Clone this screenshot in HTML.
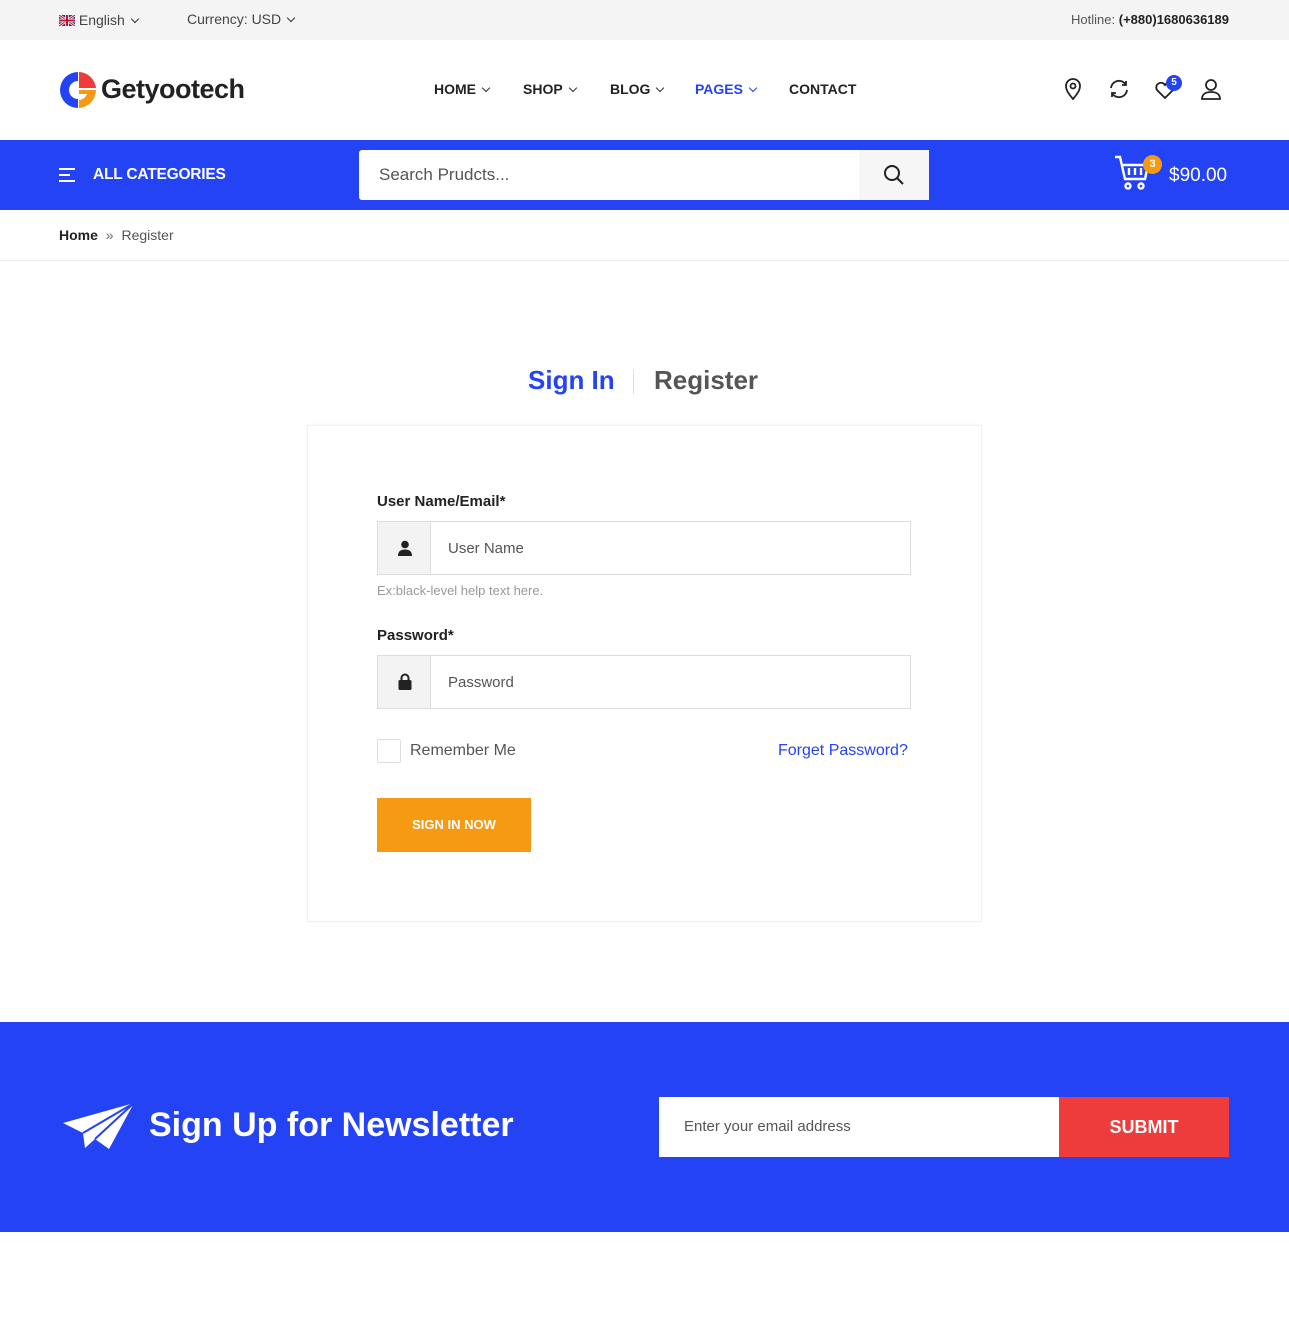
<!DOCTYPE html>
<html><head><meta charset="utf-8"><style>
*{margin:0;padding:0;box-sizing:border-box}
body{width:1289px;height:1344px;background:#fff;font-family:"Liberation Sans",sans-serif;color:#222;position:relative;overflow:hidden}
.a{position:absolute}
.top{top:0;left:0;width:1289px;height:40px;background:#f4f4f4;font-size:14px;color:#444}
.nav{font-size:14px;font-weight:bold;color:#222;top:81px}
.blue{background:#2443f5}
.chev{display:inline-block;width:6px;height:6px;border-right:1.5px solid #333;border-bottom:1.5px solid #333;transform:rotate(45deg);margin-left:7px;vertical-align:3px}
</style></head><body>
<div class="a top">
 <div class="a" style="left:59px;top:12px;"><svg width="16" height="11" style="vertical-align:-1px"><rect width="16" height="11" fill="#2b3a8c"/><path d="M0 0L16 11M16 0L0 11" stroke="#fff" stroke-width="2.5"/><path d="M0 0L16 11M16 0L0 11" stroke="#c8102e" stroke-width="1"/><path d="M8 0V11M0 5.5H16" stroke="#fff" stroke-width="3.5"/><path d="M8 0V11M0 5.5H16" stroke="#c8102e" stroke-width="2"/></svg> English<span class="chev"></span></div>
 <div class="a" style="left:187px;top:11px">Currency: USD<span class="chev"></span></div>
 <div class="a" style="right:60px;top:12px;font-size:13px;color:#555">Hotline: <b style="color:#222">(+880)1680636189</b></div>
</div>
<div class="a" style="left:59px;top:71px">
 <svg width="38" height="38" viewBox="0 0 38 38"><path d="M19 1A18 18 0 0 0 19 37V28A9 9 0 0 1 19 10Z" fill="#2443f5"/><path d="M20 1A18 18 0 0 1 37 17H20Z" fill="#ee3b3b"/><path d="M20 19H37A18 18 0 0 1 20 37V29A9 9 0 0 0 28 23H20Z" fill="#f59a12"/></svg>
</div>
<div class="a" style="left:101px;top:74px;font-size:27px;font-weight:bold;color:#222;letter-spacing:-0.5px">Getyootech</div>
<div class="a nav" style="left:434px">HOME<span class="chev"></span></div>
<div class="a nav" style="left:523px">SHOP<span class="chev"></span></div>
<div class="a nav" style="left:610px">BLOG<span class="chev"></span></div>
<div class="a nav" style="left:695px;color:#2443f5">PAGES<span class="chev" style="border-color:#2443f5"></span></div>
<div class="a nav" style="left:789px">CONTACT</div>
<svg class="a" style="left:1063px;top:78px" width="20" height="22" viewBox="0 0 20 22" fill="none" stroke="#222" stroke-width="1.8"><path d="M10 21C4 14 3 11 3 8a7 7 0 0 1 14 0c0 3-1 6-7 13Z"/><circle cx="10" cy="8" r="2.5"/></svg>
<svg class="a" style="left:1108px;top:79px" width="22" height="20" viewBox="0 0 22 20" fill="none" stroke="#222" stroke-width="1.8"><path d="M3 9a8 8 0 0 1 15-3M19 11a8 8 0 0 1-15 3"/><path d="M18 2v4h-4M4 18v-4h4"/></svg>
<svg class="a" style="left:1154px;top:80px" width="22" height="20" viewBox="0 0 22 20" fill="none" stroke="#222" stroke-width="1.8"><path d="M11 18L3 10a4.5 4.5 0 0 1 8-5 4.5 4.5 0 0 1 8 5Z"/></svg>
<div class="a" style="left:1166px;top:75px;width:16px;height:16px;border-radius:50%;background:#2443f5;color:#fff;font-size:10px;font-weight:bold;text-align:center;line-height:16px">5</div>
<svg class="a" style="left:1200px;top:78px" width="22" height="22" viewBox="0 0 22 22" fill="none" stroke="#222" stroke-width="1.8"><circle cx="11" cy="7" r="5"/><path d="M2 21c0-5 4-7 9-7s9 2 9 7Z"/></svg>

<div class="a blue" style="top:140px;left:0;width:1289px;height:70px">
 <svg class="a" style="left:59px;top:28px" width="16" height="14"><path d="M0 1H16M0 7H11M0 13H16" stroke="#fff" stroke-width="2"/></svg>
 <div class="a" style="left:93px;top:26px;color:#fff;font-weight:bold;font-size:15.5px;letter-spacing:-0.2px">ALL CATEGORIES</div>
 <div class="a" style="left:359px;top:10px;width:570px;height:50px;background:#fff;border-radius:3px">
  <div class="a" style="left:20px;top:15px;font-size:17px;color:#555">Search Prudcts...</div>
  <div class="a" style="right:0;top:0;width:70px;height:50px;background:#f6f6f6"></div>
  <svg class="a" style="left:524px;top:14px" width="22" height="22" fill="none" stroke="#222" stroke-width="2"><circle cx="9" cy="9" r="7"/><path d="M14 14L20 20"/></svg>
 </div>
 <svg class="a" style="left:1113px;top:15px" width="40" height="36" fill="none" stroke="#fff" stroke-width="2.4"><path d="M2 2h5l5 22h20l3-14H10"/><path d="M16 13v7M22 13v7M28 13v7"/><circle cx="15" cy="31" r="2.5"/><circle cx="28" cy="31" r="2.5"/></svg>
 <div class="a" style="left:1143px;top:15px;width:19px;height:19px;border-radius:50%;background:#f59a12;color:#fff;font-size:11px;font-weight:bold;text-align:center;line-height:19px">3</div>
 <div class="a" style="left:1169px;top:25px;color:#fff;font-size:19px">$90.00</div>
</div>
<div class="a" style="top:227px;left:59px;font-size:14px"><b style="color:#222">Home</b> <span style="color:#666;margin:0 4px">»</span> <span style="color:#555">Register</span></div>
<div class="a" style="top:260px;left:0;width:1289px;height:1px;background:#ececec"></div>

<div class="a" style="left:528px;top:365px;font-size:26px;font-weight:bold;color:#2443f5">Sign In</div>
<div class="a" style="left:633px;top:370px;width:1px;height:24px;background:#ddd"></div>
<div class="a" style="left:654px;top:365px;font-size:26px;font-weight:bold;color:#555">Register</div>

<div class="a" style="left:307px;top:425px;width:675px;height:497px;border:1px solid #f0f0f0;box-shadow:0 0 6px rgba(0,0,0,.03)"></div>
<div class="a" style="left:377px;top:493px;font-size:15px;font-weight:bold">User Name/Email*</div>
<div class="a" style="left:377px;top:521px;width:534px;height:54px;border:1px solid #ddd">
 <div class="a" style="left:0;top:0;width:53px;height:52px;background:#f3f3f3;border-right:1px solid #ddd"></div>
 <svg class="a" style="left:20px;top:18px" width="14" height="16"><circle cx="7" cy="4.5" r="3.8" fill="#222"/><path d="M0 16c0-5 3-6.5 7-6.5s7 1.5 7 6.5Z" fill="#222"/></svg>
 <div class="a" style="left:70px;top:18px;font-size:15px;color:#555">User Name</div>
</div>
<div class="a" style="left:377px;top:583px;font-size:13px;color:#999">Ex:black-level help text here.</div>
<div class="a" style="left:377px;top:627px;font-size:15px;font-weight:bold">Password*</div>
<div class="a" style="left:377px;top:655px;width:534px;height:54px;border:1px solid #ddd">
 <div class="a" style="left:0;top:0;width:53px;height:52px;background:#f3f3f3;border-right:1px solid #ddd"></div>
 <svg class="a" style="left:20px;top:17px" width="14" height="17"><path d="M3.5 8V5a3.5 3.5 0 0 1 7 0v3" fill="none" stroke="#222" stroke-width="2"/><rect x="0.5" y="7" width="13" height="10" rx="1.5" fill="#222"/></svg>
 <div class="a" style="left:70px;top:18px;font-size:15px;color:#555">Password</div>
</div>
<div class="a" style="left:377px;top:739px;width:24px;height:24px;border:1px solid #ddd;border-radius:2px"></div>
<div class="a" style="left:410px;top:742px;font-size:16px;color:#555">Remember Me</div>
<div class="a" style="left:778px;top:742px;font-size:16px;color:#2443f5">Forget Password?</div>
<div class="a" style="left:377px;top:798px;width:154px;height:54px;background:#f59a12;color:#fff;font-size:13px;font-weight:bold;text-align:center;line-height:54px">SIGN IN NOW</div>

<div class="a blue" style="top:1022px;left:0;width:1289px;height:210px">
 <svg class="a" style="left:63px;top:81px" width="72" height="47" viewBox="0 0 72 47"><path d="M0 20L71 0L46 46L32 36L22 45L20 30Z" fill="#fff"/><path d="M20 30L71 0L32 36" fill="none" stroke="#2443f5" stroke-width="2"/></svg>
 <div class="a" style="left:149px;top:84px;color:#fff;font-size:34px;font-weight:bold">Sign Up for Newsletter</div>
 <div class="a" style="left:659px;top:75px;width:400px;height:60px;background:#fff"><div class="a" style="left:25px;top:21px;font-size:15px;color:#555">Enter your email address</div></div>
 <div class="a" style="left:1059px;top:75px;width:170px;height:60px;background:#ee3b3b;color:#fff;font-size:18px;font-weight:bold;text-align:center;line-height:60px">SUBMIT</div>
</div>
</body></html>
